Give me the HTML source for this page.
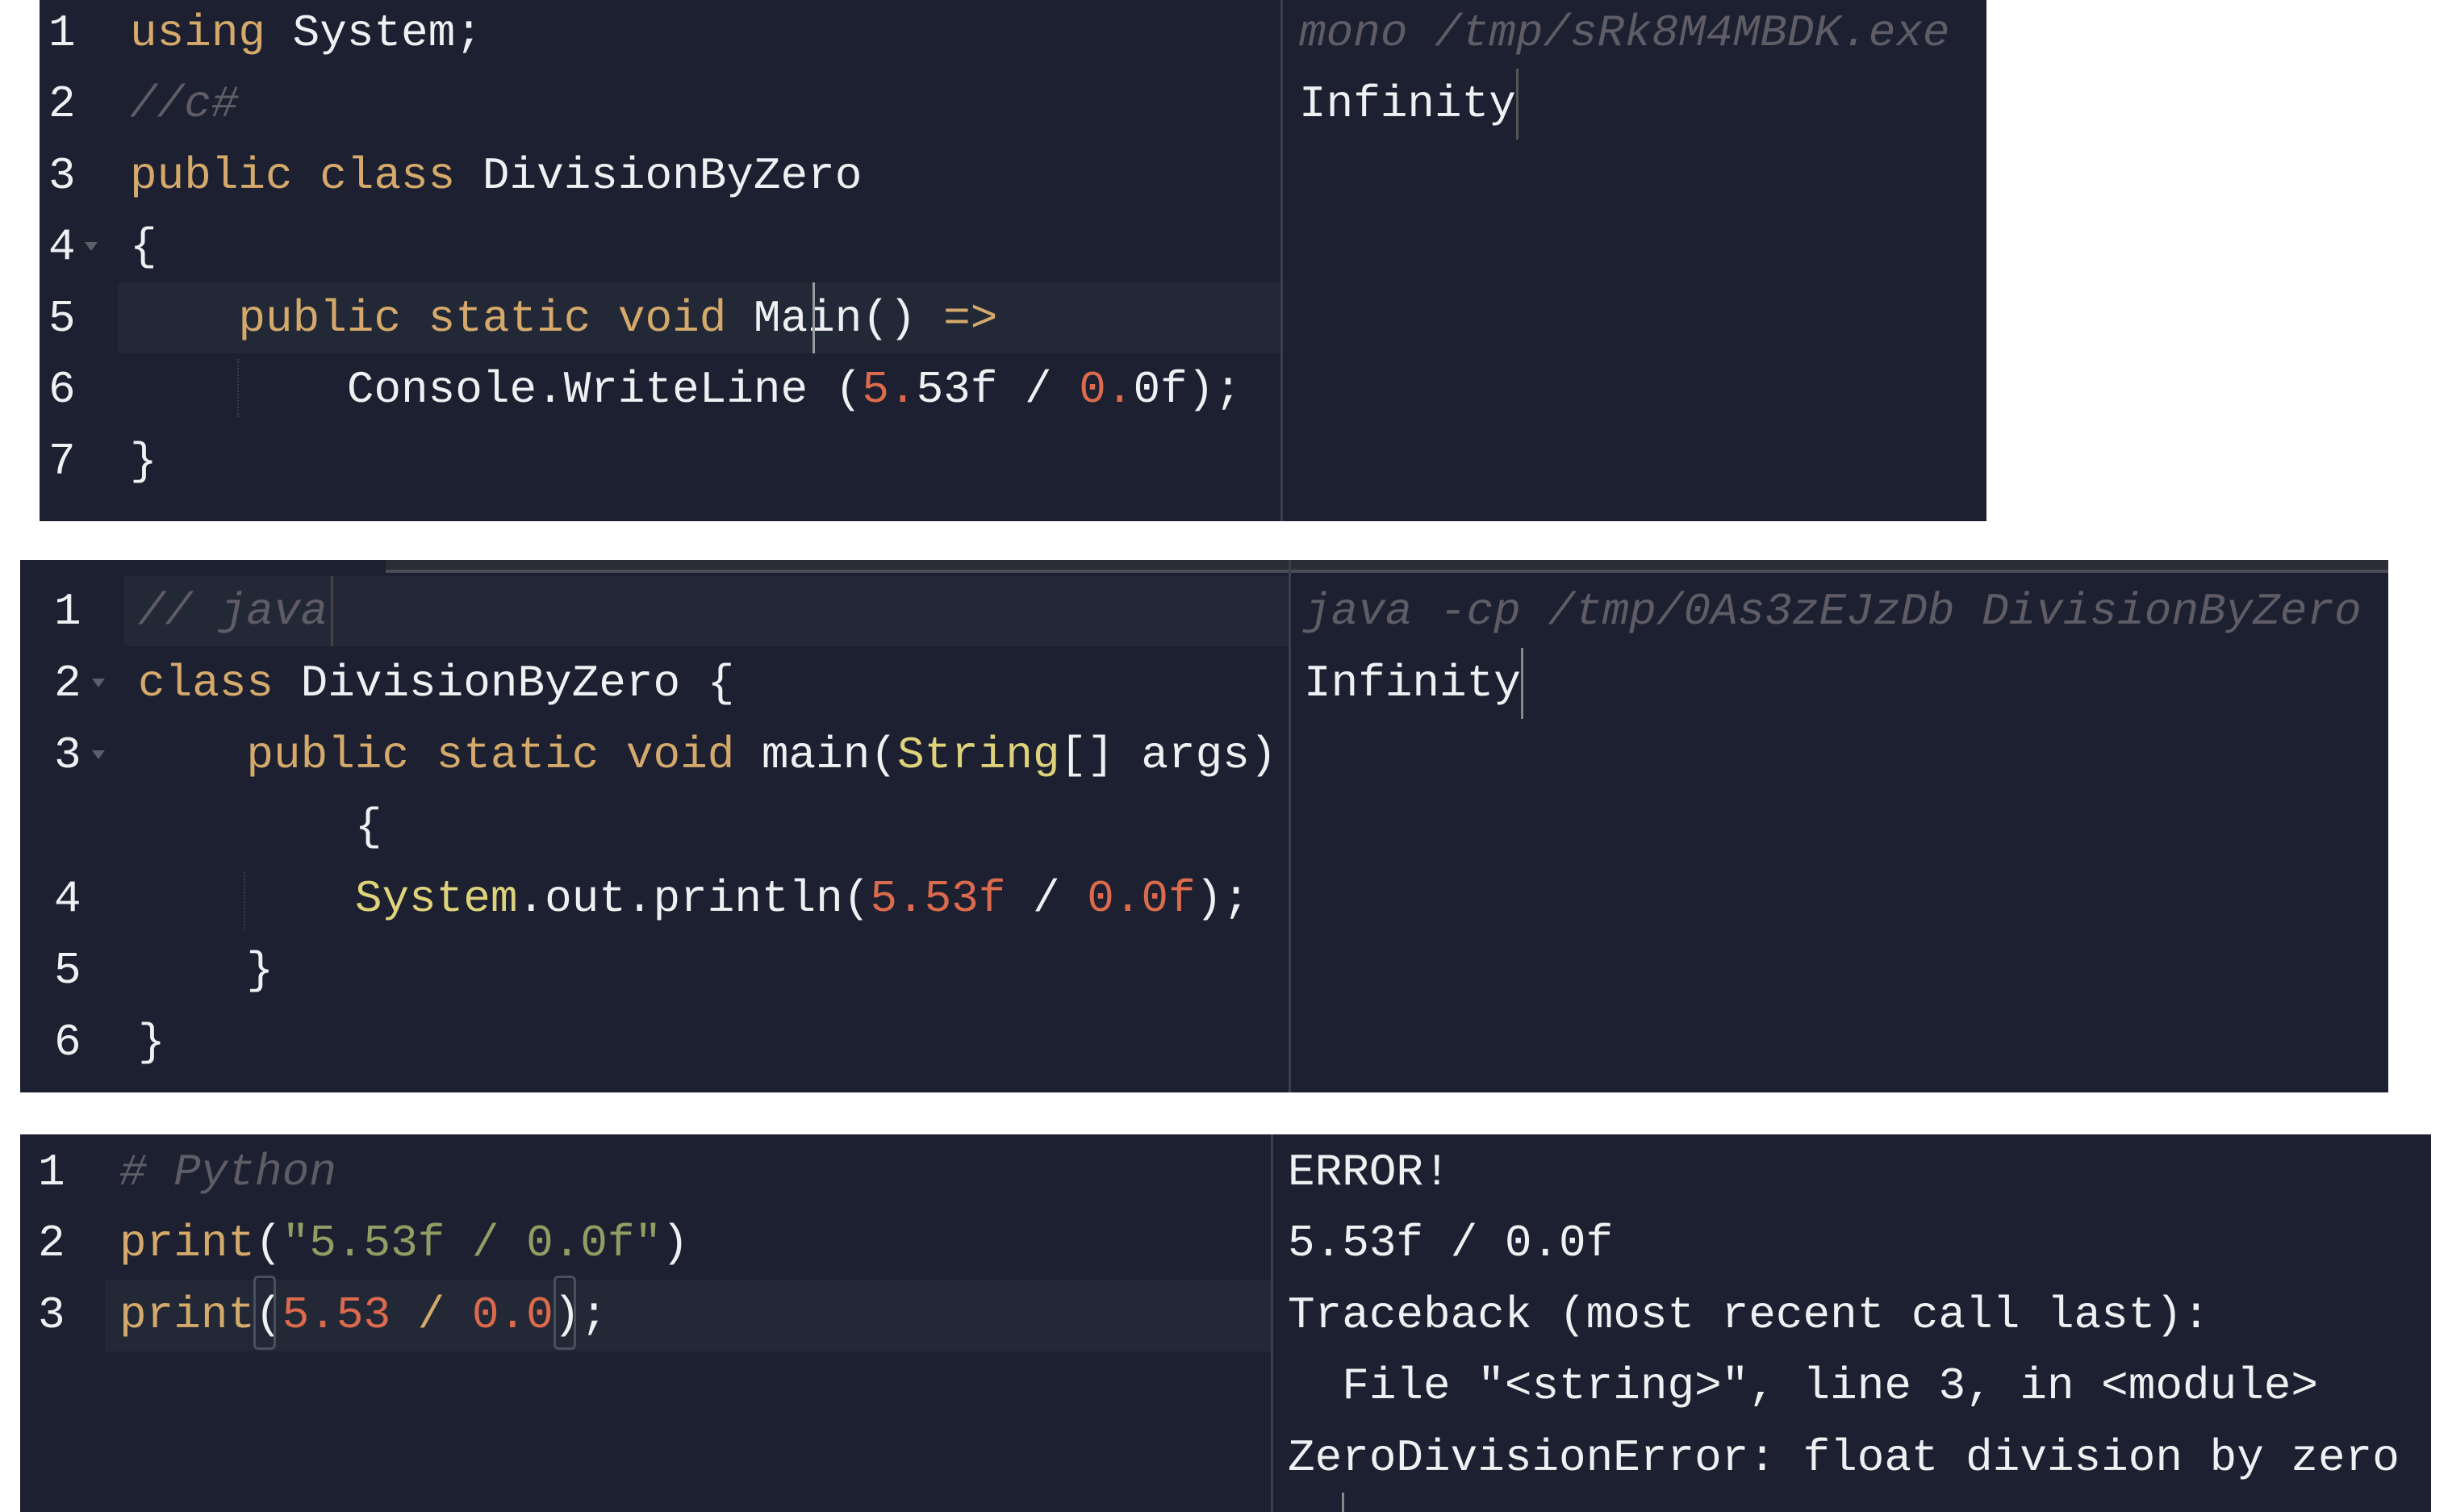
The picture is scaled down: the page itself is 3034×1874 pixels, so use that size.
<!DOCTYPE html>
<html><head><meta charset="utf-8"><style>
body{margin:0;width:3034px;height:1874px;background:#fff;position:relative;overflow:hidden;font-family:"Liberation Mono",monospace;font-size:56px;}
.p{position:absolute;background:#1c2030;overflow:hidden}
.l{position:absolute;height:88px;line-height:88px;white-space:pre;color:#eef0f2}
.n{position:absolute;height:88px;line-height:88px;color:#eef0f2}
.k{color:#d4a96a}.c{color:#5f5c66;font-style:italic}.num{color:#dc6a4c}.s{color:#939c63}.y{color:#ded27a}
.hl{position:absolute;background:#232837}
.dv{position:absolute;width:3px;background:#3a3f4c}
.tri{position:absolute;width:0;height:0;border-left:8px solid transparent;border-right:8px solid transparent;border-top:11px solid #5a5f6a}
.cur{position:absolute;width:3px;background:#9a9ca2}
.g{position:absolute;width:0;border-left:2px dotted #3a3e48}
</style></head><body>

<!-- Panel 1 -->
<div class="p" style="left:49px;top:0;width:2413px;height:646px">
<div class="hl" style="left:97px;top:350px;width:1441px;height:88px"></div>
<div class="dv" style="left:1538px;top:0;height:646px"></div>
<div class="n" style="left:11px;top:-3px">1</div>
<div class="n" style="left:11px;top:85px">2</div>
<div class="n" style="left:11px;top:174px">3</div>
<div class="n" style="left:11px;top:262px">4</div>
<div class="tri" style="left:56px;top:300px"></div>
<div class="n" style="left:11px;top:351px">5</div>
<div class="n" style="left:11px;top:439px">6</div>
<div class="n" style="left:11px;top:528px">7</div>
<div class="l" style="left:112px;top:-3px"><span class="k">using</span> System;</div>
<div class="l" style="left:112px;top:85px"><span class="c">//c#</span></div>
<div class="l" style="left:112px;top:174px"><span class="k">public class</span> DivisionByZero</div>
<div class="l" style="left:112px;top:262px">{</div>
<div class="l" style="left:112px;top:351px">    <span class="k">public static void</span> Main() <span class="k">=&gt;</span></div>
<div class="l" style="left:112px;top:439px">        Console.WriteLine (<span class="num">5.</span>53f / <span class="num">0.</span>0f);</div>
<div class="l" style="left:112px;top:528px">}</div>
<div class="cur" style="left:958px;top:350px;height:88px"></div>
<div class="g" style="left:245px;top:445px;height:72px"></div>
<div class="l" style="left:1561px;top:-3px"><span class="c">mono /tmp/sRk8M4MBDK.exe</span></div>
<div class="l" style="left:1561px;top:85px">Infinity</div>
<div class="cur" style="left:1830px;top:85px;height:88px;background:#555"></div>
</div>

<!-- Panel 2 -->
<div class="p" style="left:25px;top:694px;width:2935px;height:660px">
<div style="position:absolute;left:453px;top:0;width:2498px;height:12px;background:#2a2d36;border-bottom:4px solid #4a4d55"></div>
<div class="hl" style="left:129px;top:20px;width:1443px;height:87px"></div>
<div class="dv" style="left:1572px;top:0;height:660px"></div>
<div class="n" style="left:42px;top:20px">1</div>
<div class="n" style="left:42px;top:109px">2</div>
<div class="tri" style="left:89px;top:147px"></div>
<div class="n" style="left:42px;top:198px">3</div>
<div class="tri" style="left:89px;top:236px"></div>
<div class="n" style="left:42px;top:376px">4</div>
<div class="n" style="left:42px;top:465px">5</div>
<div class="n" style="left:42px;top:554px">6</div>
<div class="l" style="left:146px;top:20px"><span class="c">// java</span></div>
<div class="cur" style="left:385px;top:20px;height:87px;background:#444"></div>
<div class="l" style="left:146px;top:109px"><span class="k">class</span> DivisionByZero {</div>
<div class="l" style="left:146px;top:198px">    <span class="k">public static void</span> main(<span class="y">String</span>[] args)</div>
<div class="l" style="left:146px;top:287px">        {</div>
<div class="l" style="left:146px;top:376px">        <span class="y">System</span>.out.println(<span class="num">5.53f</span> / <span class="num">0.0f</span>);</div>
<div class="l" style="left:146px;top:465px">    }</div>
<div class="l" style="left:146px;top:554px">}</div>
<div class="g" style="left:277px;top:387px;height:70px"></div>
<div class="l" style="left:1591px;top:20px"><span class="c">java -cp /tmp/0As3zEJzDb DivisionByZero</span></div>
<div class="l" style="left:1591px;top:109px">Infinity</div>
<div class="cur" style="left:1860px;top:109px;height:88px;background:#888"></div>
</div>

<!-- Panel 3 -->
<div class="p" style="left:25px;top:1406px;width:2988px;height:468px">
<div class="hl" style="left:105px;top:181px;width:1445px;height:88px"></div>
<div class="dv" style="left:1550px;top:0;height:468px"></div>
<div class="n" style="left:22px;top:3px">1</div>
<div class="n" style="left:22px;top:91px">2</div>
<div class="n" style="left:22px;top:180px">3</div>
<div class="l" style="left:123px;top:3px"><span class="c"># Python</span></div>
<div class="l" style="left:123px;top:91px"><span class="k">print</span>(<span class="s">"5.53f / 0.0f"</span>)</div>
<div class="l" style="left:123px;top:180px"><span class="k">print</span>(<span class="num">5.53</span> <span class="k">/</span> <span class="num">0.0</span>);</div>
<div style="position:absolute;left:289px;top:175px;width:28px;height:92px;border:3px solid #4a4f5c;border-radius:6px;box-sizing:border-box"></div>
<div style="position:absolute;left:661px;top:175px;width:28px;height:92px;border:3px solid #4a4f5c;border-radius:6px;box-sizing:border-box"></div>
<div class="l" style="left:1571px;top:3px">ERROR!</div>
<div class="l" style="left:1571px;top:91px">5.53f / 0.0f</div>
<div class="l" style="left:1571px;top:180px">Traceback (most recent call last):</div>
<div class="l" style="left:1571px;top:268px">  File "&lt;string&gt;", line 3, in &lt;module&gt;</div>
<div class="l" style="left:1571px;top:357px">ZeroDivisionError: float division by zero</div>
<div class="cur" style="left:1638px;top:444px;height:30px;background:#888"></div>
</div>

</body></html>
